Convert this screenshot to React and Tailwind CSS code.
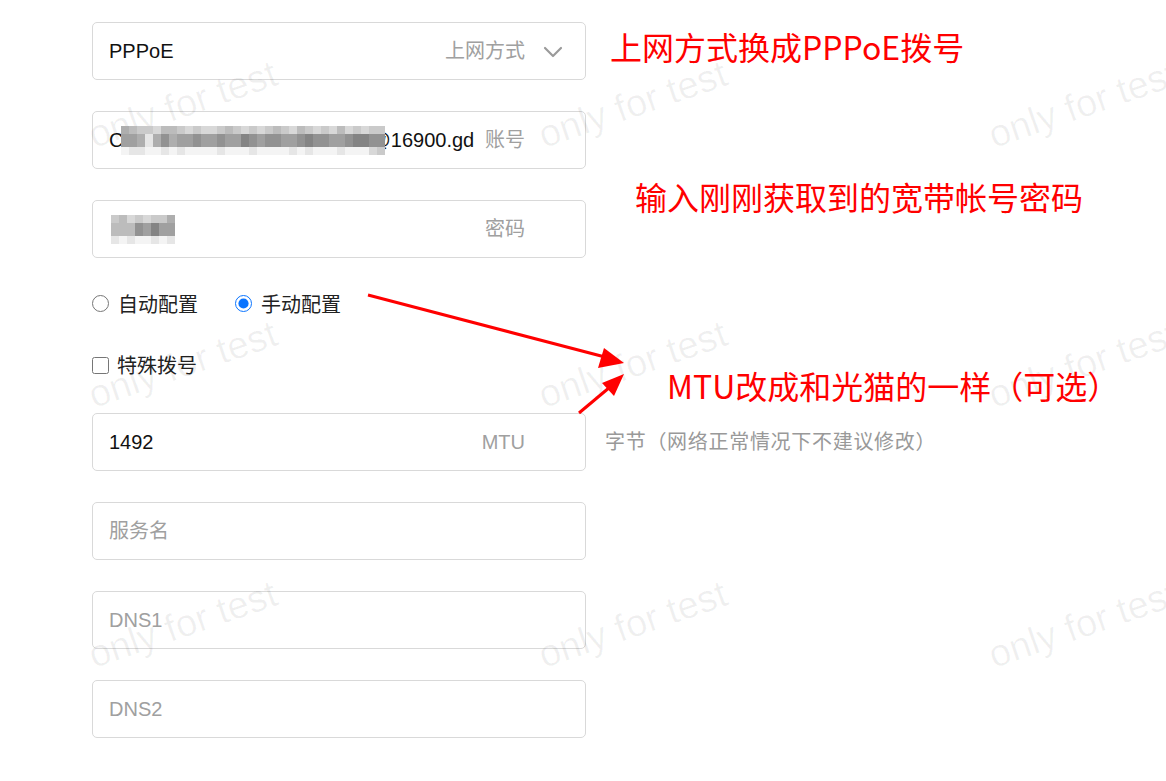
import { ChevronDown } from 'lucide-react'

const sans = "font-['Liberation_Sans','Noto_Sans_CJK_SC',sans-serif]"
const cjk = "font-['Noto_Sans_CJK_SC',sans-serif]"

const tones = [
  'bg-[#f4f4f4]', 'bg-[#e6e6e6]', 'bg-[#d8d8d8]', 'bg-[#cacaca]', 'bg-[#bcbcbc]',
  'bg-[#aeaeae]', 'bg-[#a0a0a0]', 'bg-[#929292]', 'bg-[#848484]', 'bg-[#7a7a7a]',
]

// tone index per cell, one string per row
const accountRows = [
  '543324432322343232343243232423233',
  '665157566766766876776678776678877',
  '011001010000100010000101000100023',
]
const passwordRows = [
  '34232335',
  '44476866',
  '10100101',
]

const marks = [
  'left-[96px] top-[116px]', 'left-[546px] top-[116px]', 'left-[996px] top-[116px]',
  'left-[96px] top-[376px]', 'left-[546px] top-[376px]', 'left-[996px] top-[376px]',
  'left-[96px] top-[636px]', 'left-[546px] top-[636px]', 'left-[996px] top-[636px]',
]

function Pixelated({ rows }) {
  return (
    <div className="flex flex-col">
      {rows.map((row, r) => (
        <div key={r} className={'flex ' + (r === 1 ? 'h-[13px]' : 'h-[8px]')}>
          {row.split('').map((d, c) => (
            <div key={c} className={'w-[8px] h-full ' + tones[Number(d)]} />
          ))}
        </div>
      ))}
    </div>
  )
}

function Field({ children, label, chevron, side }) {
  return (
    <div className="flex items-center">
      <div className="w-[494px] h-[58px] shrink-0 border border-[#d9d9d9] rounded-[5px] bg-white flex items-center pl-[16px] pr-[60px] relative">
        <div className="flex-1 flex items-center text-[20px] text-[#111] min-w-0">{children}</div>
        {label && <span className="text-[20px] text-[#a0a0a0]">{label}</span>}
        {chevron && (
          <ChevronDown className="absolute right-[16px] top-[13px] text-[#9a9a9a]" size={32} strokeWidth={1.6} />
        )}
      </div>
      {side && <span className="ml-[19px] text-[20px] tracking-[0.7px] text-[#999]">{side}</span>}
    </div>
  )
}

export default function App() {
  return (
    <div className={'relative w-[1166px] h-[781px] overflow-hidden bg-white ' + sans}>
      <div className="pl-[92px] pt-[22px] flex flex-col">
        <Field label="上网方式" chevron>PPPoE</Field>

        <div className="mt-[31px]">
          <Field label="账号">
            <span>C</span>
            <span className="relative z-10 -ml-[2px]">
              <Pixelated rows={accountRows} />
            </span>
            <span className="-ml-[15px]">@</span>
            <span>16900.gd</span>
          </Field>
        </div>

        <div className="mt-[31px]">
          <Field label="密码">
            <span className="ml-[2px]">
              <Pixelated rows={passwordRows} />
            </span>
          </Field>
        </div>

        <div className="mt-[15px] h-[60px] flex items-center gap-[37px] text-[20px] text-[#222]">
          <label className="flex items-center gap-[9px]">
            <input type="radio" name="mode" className="w-[17px] h-[17px] m-0" />
            <span className="mt-[3px]">自动配置</span>
          </label>
          <label className="flex items-center gap-[9px]">
            <input type="radio" name="mode" defaultChecked className="w-[17px] h-[17px] m-0 accent-[#0a74ff]" />
            <span className="mt-[3px]">手动配置</span>
          </label>
        </div>

        <div className="h-[64px] flex items-center text-[20px] text-[#222]">
          <label className="flex items-center gap-[8px]">
            <input type="checkbox" className="w-[17px] h-[17px] m-0" />
            <span className="mt-[2px]">特殊拨号</span>
          </label>
        </div>

        <div className="mt-[16px]">
          <Field label="MTU" side="字节（网络正常情况下不建议修改）">1492</Field>
        </div>

        <div className="mt-[31px]">
          <Field><span className="text-[#a0a0a0]">服务名</span></Field>
        </div>
        <div className="mt-[31px]">
          <Field><span className="text-[#a0a0a0]">DNS1</span></Field>
        </div>
        <div className="mt-[31px]">
          <Field><span className="text-[#a0a0a0]">DNS2</span></Field>
        </div>
      </div>

      {/* watermark */}
      {marks.map((m) => (
        <div key={m}
             className={'absolute pointer-events-none text-[38px] leading-none text-[#000]/[0.06] -rotate-[19deg] origin-bottom-left whitespace-nowrap ' + m}>
          only for test
        </div>
      ))}

      {/* annotations */}
      <div className={'absolute left-[610px] top-[25px] text-[32px] leading-[42px] text-[#ff0000] ' + cjk}>
        上网方式换成PPPoE拨号
      </div>
      <div className={'absolute left-[635px] top-[175px] text-[32px] leading-[42px] text-[#ff0000] ' + cjk}>
        输入刚刚获取到的宽带帐号密码
      </div>
      <div className={'absolute left-[667px] top-[364px] text-[32px] leading-[42px] text-[#ff0000] ' + cjk}>
        MTU改成和光猫的一样（可选）
      </div>

      <svg className="absolute left-0 top-0 pointer-events-none" width="1166" height="781">
        <line x1="368" y1="295" x2="605" y2="357" stroke="#ff0000" strokeWidth="3" />
        <polygon points="624,363 598,368 604,348" fill="#ff0000" />
        <line x1="579" y1="413" x2="610" y2="387" stroke="#ff0000" strokeWidth="3" />
        <polygon points="624,374 614,396 602,383" fill="#ff0000" />
      </svg>
    </div>
  )
}
